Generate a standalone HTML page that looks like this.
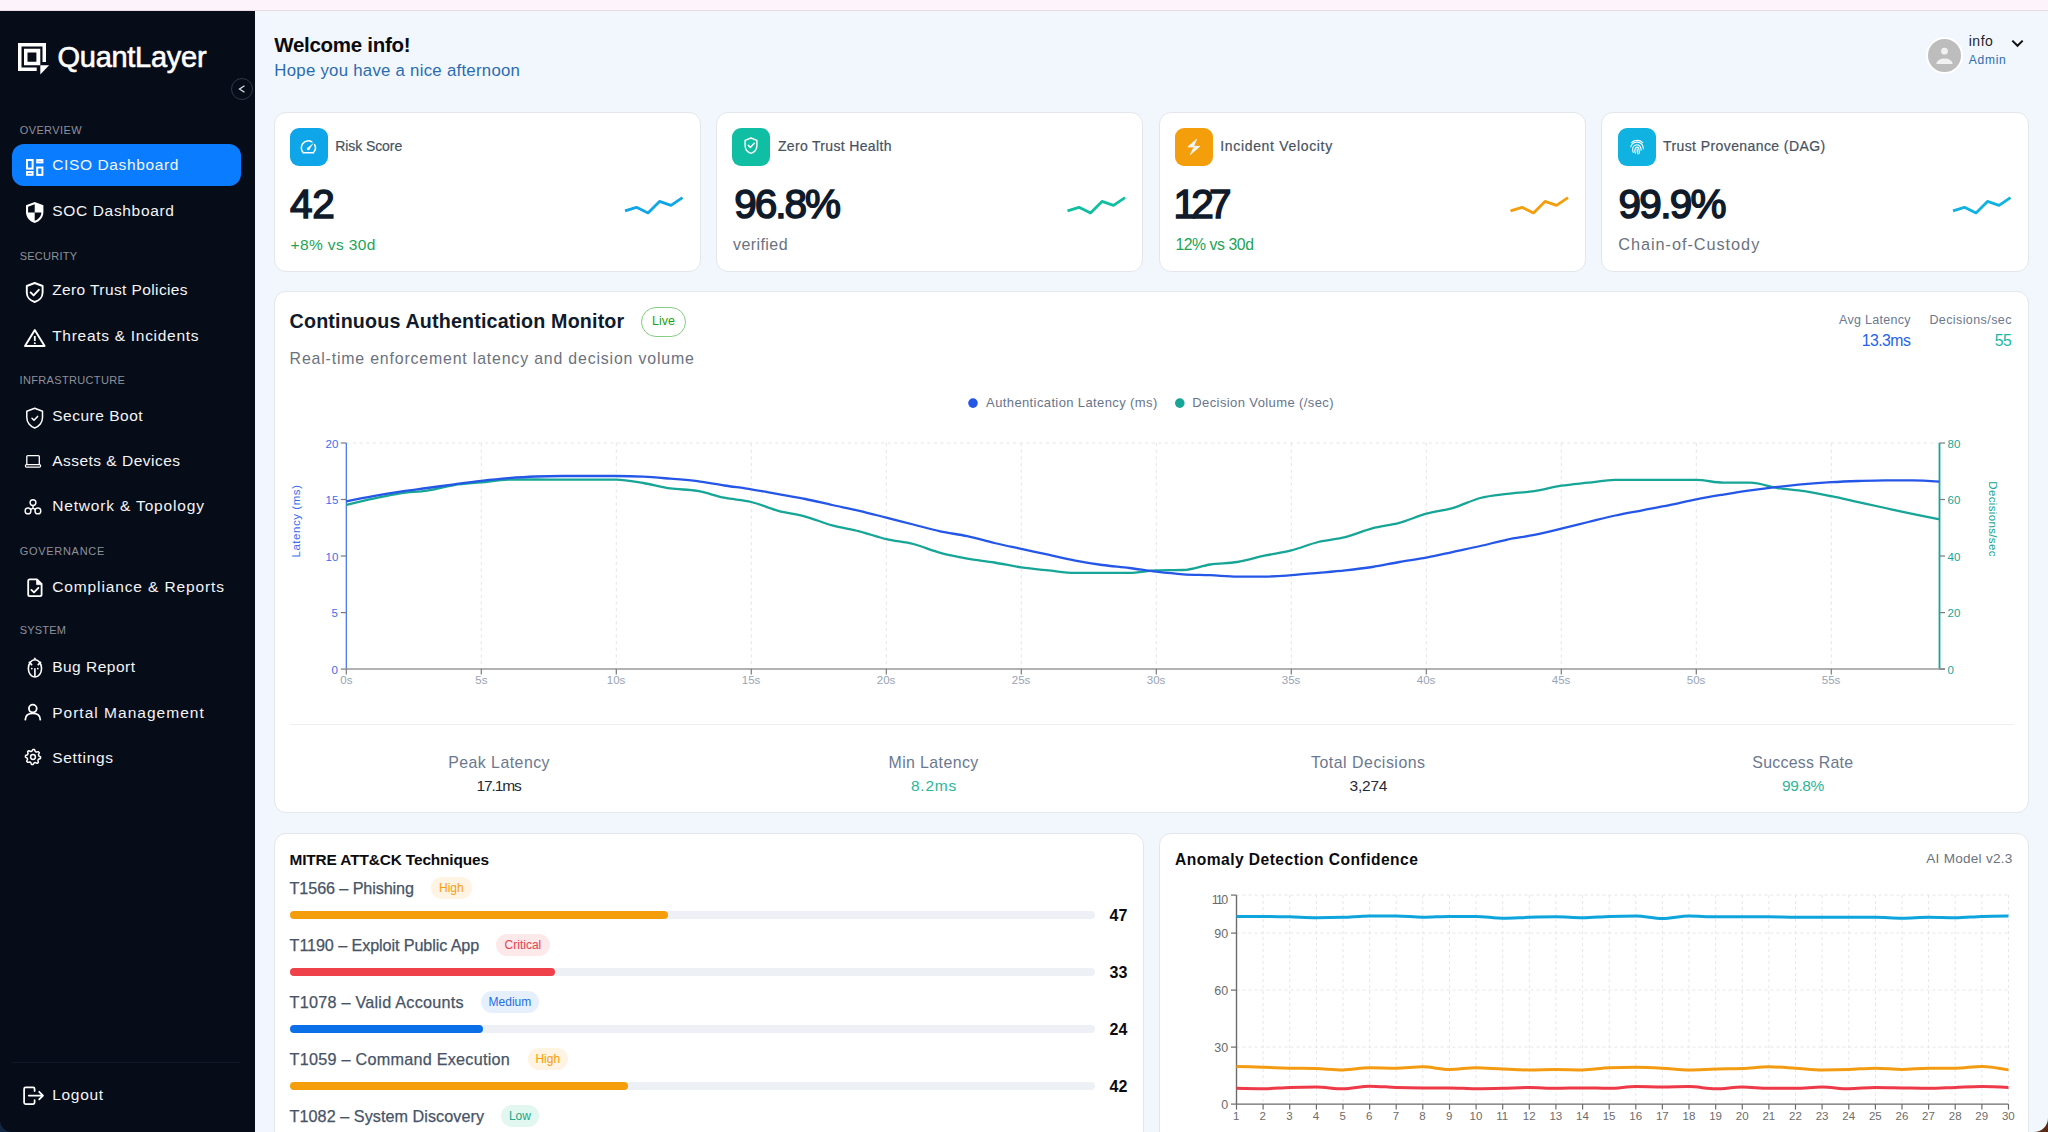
<!DOCTYPE html>
<html><head><meta charset="utf-8"><title>QuantLayer</title>
<style>
html,body{margin:0;padding:0;width:2048px;height:1132px;overflow:hidden;background:#f2f7fd;}
body{position:relative;font-family:"Liberation Sans",sans-serif;}
.t{position:absolute;white-space:pre;}
.b{position:absolute;box-sizing:border-box;}
svg.ov{position:absolute;left:0;top:0;}
</style></head><body>
<div class="b" style="left:0px;top:0px;width:2048px;height:11px;background:#fdf4fb;border-bottom:1px solid #eadbe3;"></div>
<div class="b" style="left:0px;top:11px;width:255px;height:1121px;background:#070c19;"></div>
<div class="b" style="left:274px;top:112px;width:427px;height:160px;background:#fff;border:1px solid #e3e6ea;border-radius:12px;"></div>
<div class="b" style="left:716.3px;top:112px;width:427px;height:160px;background:#fff;border:1px solid #e3e6ea;border-radius:12px;"></div>
<div class="b" style="left:1158.7px;top:112px;width:427px;height:160px;background:#fff;border:1px solid #e3e6ea;border-radius:12px;"></div>
<div class="b" style="left:1601px;top:112px;width:428px;height:160px;background:#fff;border:1px solid #e3e6ea;border-radius:12px;"></div>
<div class="b" style="left:274px;top:290.5px;width:1754.5px;height:522.5px;background:#fff;border:1px solid #e3e6ea;border-radius:12px;"></div>
<div class="b" style="left:274px;top:832.5px;width:869.5px;height:320px;background:#fff;border:1px solid #e3e6ea;border-radius:12px;"></div>
<div class="b" style="left:1159.3px;top:832.5px;width:869.7px;height:320px;background:#fff;border:1px solid #e3e6ea;border-radius:12px;"></div>
<div class="b" style="left:12px;top:144.3px;width:229px;height:41.5px;background:#0a7cff;border-radius:12px;"></div>
<div class="b" style="left:231px;top:78px;width:22px;height:22px;background:#070c19;border:1px solid #323846;border-radius:50%;"></div>
<div class="b" style="left:12px;top:1062px;width:228px;height:1px;background:#121826;"></div>
<div class="b" style="left:290px;top:128px;width:38px;height:38px;background:#0ea5e9;border-radius:9px;"></div>
<div class="b" style="left:732px;top:128px;width:38px;height:38px;background:#10bfa3;border-radius:9px;"></div>
<div class="b" style="left:1175px;top:128px;width:38px;height:38px;background:#f59e0b;border-radius:9px;"></div>
<div class="b" style="left:1617.5px;top:128px;width:38px;height:38px;background:#0fb2e0;border-radius:9px;"></div>
<div class="b" style="left:641px;top:307px;width:45px;height:30px;border:1px solid #84cf84;border-radius:15px;background:#fff;"></div>
<div class="b" style="left:289.5px;top:723.5px;width:1724px;height:1px;background:#eceef1;"></div>
<div class="b" style="left:431.4px;top:876.5px;width:40.200000000000045px;height:22.5px;background:#fff3e3;border-radius:11px;"></div>
<div class="b" style="left:289.5px;top:910.8px;width:805px;height:8px;background:#edf1f6;border-radius:4px;"></div>
<div class="b" style="left:289.5px;top:910.8px;width:378.35px;height:8px;background:#f59e0b;border-radius:4px;"></div>
<div class="b" style="left:496.4px;top:933.5px;width:53.30000000000007px;height:22.5px;background:#fde8ea;border-radius:11px;"></div>
<div class="b" style="left:289.5px;top:967.8px;width:805px;height:8px;background:#edf1f6;border-radius:4px;"></div>
<div class="b" style="left:289.5px;top:967.8px;width:265.65px;height:8px;background:#ef4149;border-radius:4px;"></div>
<div class="b" style="left:480.8px;top:990.5px;width:58.599999999999966px;height:22.5px;background:#e6f0fd;border-radius:11px;"></div>
<div class="b" style="left:289.5px;top:1024.8px;width:805px;height:8px;background:#edf1f6;border-radius:4px;"></div>
<div class="b" style="left:289.5px;top:1024.8px;width:193.2px;height:8px;background:#0b6fe8;border-radius:4px;"></div>
<div class="b" style="left:527.7px;top:1047.5px;width:40.39999999999998px;height:22.5px;background:#fff3e3;border-radius:11px;"></div>
<div class="b" style="left:289.5px;top:1081.8px;width:805px;height:8px;background:#edf1f6;border-radius:4px;"></div>
<div class="b" style="left:289.5px;top:1081.8px;width:338.1px;height:8px;background:#f59e0b;border-radius:4px;"></div>
<div class="b" style="left:501.2px;top:1104.5px;width:37.400000000000034px;height:22.5px;background:#e3f7f1;border-radius:11px;"></div>
<div class="b" style="left:1926px;top:37px;width:37px;height:37px;background:#bdbdbd;border:2px solid #fff;border-radius:50%;"></div>
<svg class="ov" width="2048" height="1132" viewBox="0 0 2048 1132">
<g fill="#fff"><path d="M18,43 H46 V62 H42.5 V46.5 H21.5 V67.5 H36.7 V71 H18 Z"/><path d="M24,48.7 H40.3 V65.3 H36.4 V52.6 H27.5 V61.8 H36.4 V65.3 H24 Z"/><path d="M40.3,65.3 H49.1 L40.3,74.5 Z"/></g>
<path d="M244.5,85.8 L239.5,89 L244.5,92.2" fill="none" stroke="#d7dbe2" stroke-width="1.3"/>
<g fill="none" stroke="#fff" stroke-width="2"><rect x="27" y="160" width="5.6" height="8.6"/><rect x="37.2" y="160" width="5.2" height="2.4"/><rect x="27" y="172" width="5.6" height="2.8"/><rect x="37.2" y="167.5" width="5.2" height="7.4"/></g>
<path d="M34.7,202 L43.4,205.3 V212 C43.4,217.5 39.6,221.5 34.7,223 C29.8,221.5 26,217.5 26,212 V205.3 Z" fill="#fff"/><path d="M34.7,204.2 L28.1,206.7 V212.4 H34.7 Z M34.7,212.4 V220.7 C38.5,219.3 41.2,216.2 41.4,212.4 Z" fill="#070c19"/>
<path d="M34.7,283 L42.6,286 V292.5 C42.6,297 39.3,300.8 34.7,302 C30.1,300.8 26.8,297 26.8,292.5 V286 Z" fill="none" stroke="#fff" stroke-width="1.9" stroke-linecap="round" stroke-linejoin="round"/><path d="M30.6,292.4 L33.6,295.4 L38.8,289.8" fill="none" stroke="#fff" stroke-width="1.9" stroke-linecap="round" stroke-linejoin="round" stroke-width="2.1"/>
<path d="M34.8,330 L44.6,346 H25 Z" fill="none" stroke="#fff" stroke-width="1.9" stroke-linecap="round" stroke-linejoin="round" stroke-width="2"/><path d="M34.8,336 V341" stroke="#fff" stroke-width="1.8"/><circle cx="34.8" cy="343.3" r="1" fill="#fff"/>
<path d="M34.7,408.3 L42.5,411.2 V417.6 C42.5,422.4 39.2,426.6 34.7,428 C30.2,426.6 26.8,422.4 26.8,417.6 V411.2 Z" fill="none" stroke="#fff" stroke-width="1.5" stroke-linejoin="round"/><path d="M32,418.2 L34,420.2 L37.6,416.4" fill="none" stroke="#fff" stroke-width="1.5" stroke-linecap="round" stroke-linejoin="round"/>
<path d="M26.8,464.6 V456.6 C26.8,455.9 27.2,455.6 27.8,455.6 H38.4 C39,455.6 39.3,455.9 39.3,456.6 V464.6" fill="none" stroke="#fff" stroke-width="1.3"/><rect x="25.4" y="464.6" width="15.2" height="2.6" rx="1.1" fill="none" stroke="#fff" stroke-width="1.2"/>
<g fill="none" stroke="#fff" stroke-width="1.4"><circle cx="33" cy="502.6" r="2.9"/><circle cx="28" cy="510.9" r="2.9"/><circle cx="37.9" cy="510.9" r="2.9"/><path d="M33,505.5 V508.2 M33,508.2 L30.6,509.6 M33,508.2 L35.4,509.6"/></g>
<path d="M36.9,579.3 H29.8 C28.8,579.3 28.2,579.9 28.2,580.9 V594.5 C28.2,595.5 28.8,596.1 29.8,596.1 H40 C41,596.1 41.6,595.5 41.6,594.5 V584 Z" fill="none" stroke="#fff" stroke-width="1.8" stroke-linejoin="round"/><path d="M36.6,579.6 V584.6 H41.4 Z" fill="#fff" stroke="#fff" stroke-width="0.8" stroke-linejoin="round"/><path d="M31.4,589.9 L34,592.4 L38.4,587.8" fill="none" stroke="#fff" stroke-width="1.8" stroke-linecap="round" stroke-linejoin="round"/>
<ellipse cx="34.95" cy="668.4" rx="6.6" ry="8.6" fill="none" stroke="#fff" stroke-width="1.6"/><path d="M33.3,659.6 L34.9,657.2 L36.6,659.6 Z" fill="#fff"/><path d="M29.4,662.4 L31.6,664.6 M40.5,662.4 L38.3,664.6" stroke="#fff" stroke-width="1.8" stroke-linecap="round"/><path d="M34.9,668.2 V676.8" stroke="#fff" stroke-width="1.6"/><circle cx="31.8" cy="668.6" r="0.9" fill="#fff"/><circle cx="37.8" cy="668.6" r="0.9" fill="#fff"/>
<g fill="none" stroke="#fff" stroke-width="1.8"><circle cx="32.8" cy="708.6" r="3.9"/><path d="M25.3,719.6 C25.5,715.4 28.7,713.4 32.8,713.4 C36.9,713.4 40.1,715.4 40.3,719.6" stroke-linecap="round"/></g>
<path d="M40.60,757.00 L40.45,758.48 L38.45,759.26 L37.91,760.28 L38.37,762.37 L37.22,763.32 L35.26,762.45 L34.15,762.79 L33.00,764.60 L31.52,764.45 L30.74,762.45 L29.72,761.91 L27.63,762.37 L26.68,761.22 L27.55,759.26 L27.21,758.15 L25.40,757.00 L25.55,755.52 L27.55,754.74 L28.09,753.72 L27.63,751.63 L28.78,750.68 L30.74,751.55 L31.85,751.21 L33.00,749.40 L34.48,749.55 L35.26,751.55 L36.28,752.09 L38.37,751.63 L39.32,752.78 L38.45,754.74 L38.79,755.85 Z" fill="none" stroke="#fff" stroke-width="1.5" stroke-linejoin="round"/><circle cx="33" cy="757" r="2.4" fill="none" stroke="#fff" stroke-width="1.5"/>
<path d="M34.6,1091.1 V1088.9 C34.6,1087.9 34.1,1087.3 33.1,1087.3 H25.6 C24.6,1087.3 24.1,1087.9 24.1,1088.9 V1102.4 C24.1,1103.4 24.6,1104 25.6,1104 H33.1 C34.1,1104 34.6,1103.4 34.6,1102.4 V1100.2" fill="none" stroke="#fff" stroke-width="1.75" stroke-linecap="round"/><path d="M28.8,1095.6 H42.8 M39.2,1091.8 L43,1095.6 L39.2,1099.4" fill="none" stroke="#fff" stroke-width="1.75" stroke-linecap="round" stroke-linejoin="round"/>
<g fill="none" stroke="#fff" stroke-width="1.5" stroke-linecap="round"><path d="M303.3,152.7 A7,7 0 0 1 311.9,141.8"/><path d="M314.6,144.6 A7,7 0 0 1 313.3,152.7"/><path d="M303.3,152.7 H313.3"/></g><path d="M307.3,148.2 L313.8,142.6 L309.3,149.7 Z" fill="#fff"/><circle cx="308.2" cy="148.9" r="1.35" fill="#fff"/>
<path d="M751,138 L756.9,140.3 V145.2 C756.9,149.2 754.4,152.3 751,153.3 C747.6,152.3 745.1,149.2 745.1,145.2 V140.3 Z" fill="none" stroke="#fff" stroke-width="1.4" stroke-linejoin="round"/><path d="M748.3,145.4 L750.3,147.4 L754.2,143.3" fill="none" stroke="#fff" stroke-width="1.5" stroke-linecap="round" stroke-linejoin="round"/>
<path d="M1196.6,139.3 L1187.9,146.8 L1194.1,147 L1190.4,154.6 L1199.7,146.4 L1193.5,146.2 Z" fill="#f4f6f8" stroke="#f4f6f8" stroke-width="0.9" stroke-linejoin="round"/>
<g fill="none" stroke="#fff" stroke-width="1.1" stroke-linecap="round"><path d="M1631.5,142.6 C1634.6,139.6 1639.6,139.6 1642.7,142.6"/><path d="M1630.7,146.8 C1631.6,142.9 1635.8,141.3 1639.2,142.6 C1641.8,143.6 1643.3,146.1 1643.3,148.8"/><path d="M1633.2,152.4 C1632.6,150.6 1632.5,148.9 1632.9,147.4 C1633.7,144.8 1637.6,143.9 1639.7,146 C1640.8,147.1 1641.1,148.5 1641.1,150.2"/><path d="M1635.4,153.3 C1634.8,151.5 1634.7,149.6 1635.3,148.2 C1636,146.7 1638.6,146.8 1638.9,148.6 C1639.1,149.9 1639,151.7 1639.6,153.1"/><path d="M1637.1,148.8 C1637,150.8 1637.3,152.6 1638.1,154.1"/></g>
<polyline points="625.0,210.8 636.5,207.3 648.0,212.9 659.5,201.4 671.0,205.3 682.5,197.7" fill="none" stroke="#0ea5e9" stroke-width="2.8" stroke-linejoin="round"/>
<polyline points="1067.5,210.8 1079.0,207.3 1090.5,212.9 1102.0,201.4 1113.5,205.3 1125.0,197.7" fill="none" stroke="#10bf9f" stroke-width="2.8" stroke-linejoin="round"/>
<polyline points="1510.5,210.8 1522.0,207.3 1533.5,212.9 1545.0,201.4 1556.5,205.3 1568.0,197.7" fill="none" stroke="#f59e0b" stroke-width="2.8" stroke-linejoin="round"/>
<polyline points="1953.0,210.8 1964.5,207.3 1976.0,212.9 1987.5,201.4 1999.0,205.3 2010.5,197.7" fill="none" stroke="#0fb2e0" stroke-width="2.8" stroke-linejoin="round"/>
<circle cx="1944.5" cy="51.2" r="3.4" fill="#f1f1f1"/><path d="M1936.4,64 C1936.4,60.3 1940.6,58.4 1944.5,58.4 C1948.4,58.4 1952.6,60.3 1952.6,64 Z" fill="#f1f1f1"/>
<path d="M2012.3,40.6 L2017.5,45.8 L2022.7,40.6" fill="none" stroke="#111" stroke-width="2"/>
<line x1="481.3" y1="443" x2="481.3" y2="669.1" stroke="#e3e6ea" stroke-width="1" stroke-dasharray="3.3 3.3"/>
<line x1="616.3" y1="443" x2="616.3" y2="669.1" stroke="#e3e6ea" stroke-width="1" stroke-dasharray="3.3 3.3"/>
<line x1="751.3" y1="443" x2="751.3" y2="669.1" stroke="#e3e6ea" stroke-width="1" stroke-dasharray="3.3 3.3"/>
<line x1="886.3" y1="443" x2="886.3" y2="669.1" stroke="#e3e6ea" stroke-width="1" stroke-dasharray="3.3 3.3"/>
<line x1="1021.3" y1="443" x2="1021.3" y2="669.1" stroke="#e3e6ea" stroke-width="1" stroke-dasharray="3.3 3.3"/>
<line x1="1156.3" y1="443" x2="1156.3" y2="669.1" stroke="#e3e6ea" stroke-width="1" stroke-dasharray="3.3 3.3"/>
<line x1="1291.3" y1="443" x2="1291.3" y2="669.1" stroke="#e3e6ea" stroke-width="1" stroke-dasharray="3.3 3.3"/>
<line x1="1426.3" y1="443" x2="1426.3" y2="669.1" stroke="#e3e6ea" stroke-width="1" stroke-dasharray="3.3 3.3"/>
<line x1="1561.3" y1="443" x2="1561.3" y2="669.1" stroke="#e3e6ea" stroke-width="1" stroke-dasharray="3.3 3.3"/>
<line x1="1696.3" y1="443" x2="1696.3" y2="669.1" stroke="#e3e6ea" stroke-width="1" stroke-dasharray="3.3 3.3"/>
<line x1="1831.3" y1="443" x2="1831.3" y2="669.1" stroke="#e3e6ea" stroke-width="1" stroke-dasharray="3.3 3.3"/>
<line x1="346.3" y1="443" x2="1939.5" y2="443" stroke="#e3e6ea" stroke-width="1" stroke-dasharray="3.3 3.3"/>
<line x1="346.3" y1="443" x2="346.3" y2="669.1" stroke="#3b6ef0" stroke-width="1.2"/>
<line x1="1939.5" y1="443" x2="1939.5" y2="669.1" stroke="#17a697" stroke-width="1.8"/>
<line x1="346.3" y1="669.1" x2="1945.0" y2="669.1" stroke="#999" stroke-width="1.5"/>
<line x1="340.8" y1="443.0" x2="346.3" y2="443.0" stroke="#7a7a7a" stroke-width="1.2"/>
<line x1="1939.5" y1="443.0" x2="1945.0" y2="443.0" stroke="#7a7a7a" stroke-width="1.2"/>
<line x1="340.8" y1="499.5" x2="346.3" y2="499.5" stroke="#7a7a7a" stroke-width="1.2"/>
<line x1="1939.5" y1="499.5" x2="1945.0" y2="499.5" stroke="#7a7a7a" stroke-width="1.2"/>
<line x1="340.8" y1="556.0" x2="346.3" y2="556.0" stroke="#7a7a7a" stroke-width="1.2"/>
<line x1="1939.5" y1="556.0" x2="1945.0" y2="556.0" stroke="#7a7a7a" stroke-width="1.2"/>
<line x1="340.8" y1="612.6" x2="346.3" y2="612.6" stroke="#7a7a7a" stroke-width="1.2"/>
<line x1="1939.5" y1="612.6" x2="1945.0" y2="612.6" stroke="#7a7a7a" stroke-width="1.2"/>
<line x1="340.8" y1="669.1" x2="346.3" y2="669.1" stroke="#7a7a7a" stroke-width="1.2"/>
<line x1="1939.5" y1="669.1" x2="1945.0" y2="669.1" stroke="#7a7a7a" stroke-width="1.2"/>
<line x1="346.3" y1="669.1" x2="346.3" y2="674.6" stroke="#7a7a7a" stroke-width="1.2"/>
<line x1="481.3" y1="669.1" x2="481.3" y2="674.6" stroke="#7a7a7a" stroke-width="1.2"/>
<line x1="616.3" y1="669.1" x2="616.3" y2="674.6" stroke="#7a7a7a" stroke-width="1.2"/>
<line x1="751.3" y1="669.1" x2="751.3" y2="674.6" stroke="#7a7a7a" stroke-width="1.2"/>
<line x1="886.3" y1="669.1" x2="886.3" y2="674.6" stroke="#7a7a7a" stroke-width="1.2"/>
<line x1="1021.3" y1="669.1" x2="1021.3" y2="674.6" stroke="#7a7a7a" stroke-width="1.2"/>
<line x1="1156.3" y1="669.1" x2="1156.3" y2="674.6" stroke="#7a7a7a" stroke-width="1.2"/>
<line x1="1291.3" y1="669.1" x2="1291.3" y2="674.6" stroke="#7a7a7a" stroke-width="1.2"/>
<line x1="1426.3" y1="669.1" x2="1426.3" y2="674.6" stroke="#7a7a7a" stroke-width="1.2"/>
<line x1="1561.3" y1="669.1" x2="1561.3" y2="674.6" stroke="#7a7a7a" stroke-width="1.2"/>
<line x1="1696.3" y1="669.1" x2="1696.3" y2="674.6" stroke="#7a7a7a" stroke-width="1.2"/>
<line x1="1831.3" y1="669.1" x2="1831.3" y2="674.6" stroke="#7a7a7a" stroke-width="1.2"/>
<path d="M346.30,504.80 C355.30,502.71 364.30,500.62 373.30,498.70 C382.30,496.78 391.30,494.65 400.30,493.30 C409.30,491.95 418.30,491.98 427.30,490.60 C436.30,489.22 445.30,486.37 454.30,485.00 C463.30,483.63 472.30,483.30 481.30,482.40 C490.30,481.50 499.30,479.67 508.30,479.60 C517.30,479.53 526.30,479.50 535.30,479.50 C544.30,479.50 553.30,479.60 562.30,479.60 C571.30,479.60 580.30,479.60 589.30,479.60 C598.30,479.60 607.30,479.60 616.30,479.60 C625.30,479.60 634.30,481.53 643.30,483.00 C652.30,484.47 661.30,487.08 670.30,488.40 C679.30,489.72 688.30,489.35 697.30,490.90 C706.30,492.45 715.30,495.85 724.30,497.70 C733.30,499.55 742.30,499.82 751.30,502.00 C760.30,504.18 769.30,508.37 778.30,510.80 C787.30,513.23 796.30,514.17 805.30,516.60 C814.30,519.03 823.30,522.95 832.30,525.40 C841.30,527.85 850.30,529.02 859.30,531.30 C868.30,533.58 877.30,536.98 886.30,539.10 C895.30,541.22 904.30,541.72 913.30,544.00 C922.30,546.28 931.30,550.37 940.30,552.80 C949.30,555.23 958.30,556.98 967.30,558.60 C976.30,560.22 985.30,561.03 994.30,562.50 C1003.30,563.97 1012.30,566.08 1021.30,567.40 C1030.30,568.72 1039.30,569.48 1048.30,570.40 C1057.30,571.32 1066.30,572.90 1075.30,572.90 C1084.30,572.90 1093.30,572.90 1102.30,572.90 C1111.30,572.90 1120.30,572.90 1129.30,572.90 C1138.30,572.90 1147.30,570.67 1156.30,570.40 C1165.30,570.13 1174.30,570.27 1183.30,570.00 C1192.30,569.73 1201.30,565.83 1210.30,564.50 C1219.30,563.17 1228.30,563.47 1237.30,562.00 C1246.30,560.53 1255.30,557.63 1264.30,555.70 C1273.30,553.77 1282.30,552.68 1291.30,550.40 C1300.30,548.12 1309.30,544.22 1318.30,542.00 C1327.30,539.78 1336.30,539.37 1345.30,537.10 C1354.30,534.83 1363.30,530.77 1372.30,528.40 C1381.30,526.03 1390.30,525.35 1399.30,522.90 C1408.30,520.45 1417.30,516.20 1426.30,513.70 C1435.30,511.20 1444.30,510.52 1453.30,507.90 C1462.30,505.28 1471.30,500.33 1480.30,498.00 C1489.30,495.67 1498.30,495.05 1507.30,493.90 C1516.30,492.75 1525.30,492.47 1534.30,491.10 C1543.30,489.73 1552.30,487.10 1561.30,485.70 C1570.30,484.30 1579.30,483.68 1588.30,482.70 C1597.30,481.72 1606.30,479.80 1615.30,479.80 C1624.30,479.80 1633.30,479.80 1642.30,479.80 C1651.30,479.80 1660.30,479.80 1669.30,479.80 C1678.30,479.80 1687.30,479.80 1696.30,479.80 C1705.30,479.80 1714.30,482.70 1723.30,482.70 C1732.30,482.70 1741.30,482.70 1750.30,482.70 C1759.30,482.70 1768.30,486.60 1777.30,488.00 C1786.30,489.40 1795.30,489.73 1804.30,491.10 C1813.30,492.47 1822.30,494.37 1831.30,496.20 C1840.30,498.03 1849.30,500.13 1858.30,502.10 C1867.30,504.07 1876.30,506.05 1885.30,508.00 C1894.30,509.95 1903.30,511.93 1912.30,513.80 C1921.30,515.67 1930.30,517.43 1939.30,519.20" fill="none" stroke="#16a596" stroke-width="2.3"/>
<path d="M346.30,501.30 C355.30,499.51 364.30,497.72 373.30,496.10 C382.30,494.48 391.30,492.95 400.30,491.60 C409.30,490.25 418.30,489.22 427.30,488.00 C436.30,486.78 445.30,485.48 454.30,484.30 C463.30,483.12 472.30,481.92 481.30,480.90 C490.30,479.88 499.30,478.93 508.30,478.20 C517.30,477.47 526.30,476.83 535.30,476.50 C544.30,476.17 553.30,476.00 562.30,476.00 C571.30,476.00 580.30,476.00 589.30,476.00 C598.30,476.00 607.30,476.00 616.30,476.00 C625.30,476.00 634.30,476.25 643.30,476.70 C652.30,477.15 661.30,477.97 670.30,478.70 C679.30,479.43 688.30,479.97 697.30,481.10 C706.30,482.23 715.30,484.13 724.30,485.50 C733.30,486.87 742.30,487.85 751.30,489.30 C760.30,490.75 769.30,492.58 778.30,494.20 C787.30,495.82 796.30,497.20 805.30,499.00 C814.30,500.80 823.30,503.03 832.30,505.00 C841.30,506.97 850.30,508.70 859.30,510.80 C868.30,512.90 877.30,515.32 886.30,517.60 C895.30,519.88 904.30,522.22 913.30,524.50 C922.30,526.78 931.30,529.35 940.30,531.30 C949.30,533.25 958.30,534.25 967.30,536.20 C976.30,538.15 985.30,540.88 994.30,543.00 C1003.30,545.12 1012.30,546.95 1021.30,548.90 C1030.30,550.85 1039.30,552.75 1048.30,554.70 C1057.30,556.65 1066.30,558.88 1075.30,560.60 C1084.30,562.32 1093.30,563.77 1102.30,565.00 C1111.30,566.23 1120.30,566.88 1129.30,568.00 C1138.30,569.12 1147.30,570.65 1156.30,571.70 C1165.30,572.75 1174.30,573.72 1183.30,574.30 C1192.30,574.88 1201.30,574.82 1210.30,575.20 C1219.30,575.58 1228.30,576.60 1237.30,576.60 C1246.30,576.60 1255.30,576.60 1264.30,576.60 C1273.30,576.60 1282.30,575.82 1291.30,575.20 C1300.30,574.58 1309.30,573.70 1318.30,572.90 C1327.30,572.10 1336.30,571.38 1345.30,570.40 C1354.30,569.42 1363.30,568.40 1372.30,567.00 C1381.30,565.60 1390.30,563.55 1399.30,562.00 C1408.30,560.45 1417.30,559.40 1426.30,557.70 C1435.30,556.00 1444.30,553.75 1453.30,551.80 C1462.30,549.85 1471.30,548.03 1480.30,546.00 C1489.30,543.97 1498.30,541.45 1507.30,539.60 C1516.30,537.75 1525.30,536.73 1534.30,534.90 C1543.30,533.07 1552.30,530.75 1561.30,528.60 C1570.30,526.45 1579.30,524.18 1588.30,522.00 C1597.30,519.82 1606.30,517.45 1615.30,515.50 C1624.30,513.55 1633.30,512.02 1642.30,510.30 C1651.30,508.58 1660.30,507.03 1669.30,505.20 C1678.30,503.37 1687.30,501.07 1696.30,499.30 C1705.30,497.53 1714.30,496.08 1723.30,494.60 C1732.30,493.12 1741.30,491.68 1750.30,490.40 C1759.30,489.12 1768.30,487.95 1777.30,486.90 C1786.30,485.85 1795.30,484.88 1804.30,484.10 C1813.30,483.32 1822.30,482.72 1831.30,482.20 C1840.30,481.68 1849.30,481.32 1858.30,481.00 C1867.30,480.68 1876.30,480.30 1885.30,480.30 C1894.30,480.30 1903.30,480.30 1912.30,480.30 C1921.30,480.30 1930.30,481.00 1939.30,481.70" fill="none" stroke="#2456e8" stroke-width="2.3"/>
<circle cx="973" cy="403.1" r="4.8" fill="#2456e8"/><circle cx="1179.8" cy="403.1" r="4.8" fill="#16a596"/>
<line x1="1263.1" y1="895.1" x2="1263.1" y2="1104.1" stroke="#e5e7eb" stroke-width="1" stroke-dasharray="3 3"/>
<line x1="1289.7" y1="895.1" x2="1289.7" y2="1104.1" stroke="#e5e7eb" stroke-width="1" stroke-dasharray="3 3"/>
<line x1="1316.4" y1="895.1" x2="1316.4" y2="1104.1" stroke="#e5e7eb" stroke-width="1" stroke-dasharray="3 3"/>
<line x1="1343.0" y1="895.1" x2="1343.0" y2="1104.1" stroke="#e5e7eb" stroke-width="1" stroke-dasharray="3 3"/>
<line x1="1369.6" y1="895.1" x2="1369.6" y2="1104.1" stroke="#e5e7eb" stroke-width="1" stroke-dasharray="3 3"/>
<line x1="1396.2" y1="895.1" x2="1396.2" y2="1104.1" stroke="#e5e7eb" stroke-width="1" stroke-dasharray="3 3"/>
<line x1="1422.8" y1="895.1" x2="1422.8" y2="1104.1" stroke="#e5e7eb" stroke-width="1" stroke-dasharray="3 3"/>
<line x1="1449.5" y1="895.1" x2="1449.5" y2="1104.1" stroke="#e5e7eb" stroke-width="1" stroke-dasharray="3 3"/>
<line x1="1476.1" y1="895.1" x2="1476.1" y2="1104.1" stroke="#e5e7eb" stroke-width="1" stroke-dasharray="3 3"/>
<line x1="1502.7" y1="895.1" x2="1502.7" y2="1104.1" stroke="#e5e7eb" stroke-width="1" stroke-dasharray="3 3"/>
<line x1="1529.3" y1="895.1" x2="1529.3" y2="1104.1" stroke="#e5e7eb" stroke-width="1" stroke-dasharray="3 3"/>
<line x1="1555.9" y1="895.1" x2="1555.9" y2="1104.1" stroke="#e5e7eb" stroke-width="1" stroke-dasharray="3 3"/>
<line x1="1582.6" y1="895.1" x2="1582.6" y2="1104.1" stroke="#e5e7eb" stroke-width="1" stroke-dasharray="3 3"/>
<line x1="1609.2" y1="895.1" x2="1609.2" y2="1104.1" stroke="#e5e7eb" stroke-width="1" stroke-dasharray="3 3"/>
<line x1="1635.8" y1="895.1" x2="1635.8" y2="1104.1" stroke="#e5e7eb" stroke-width="1" stroke-dasharray="3 3"/>
<line x1="1662.4" y1="895.1" x2="1662.4" y2="1104.1" stroke="#e5e7eb" stroke-width="1" stroke-dasharray="3 3"/>
<line x1="1689.0" y1="895.1" x2="1689.0" y2="1104.1" stroke="#e5e7eb" stroke-width="1" stroke-dasharray="3 3"/>
<line x1="1715.7" y1="895.1" x2="1715.7" y2="1104.1" stroke="#e5e7eb" stroke-width="1" stroke-dasharray="3 3"/>
<line x1="1742.3" y1="895.1" x2="1742.3" y2="1104.1" stroke="#e5e7eb" stroke-width="1" stroke-dasharray="3 3"/>
<line x1="1768.9" y1="895.1" x2="1768.9" y2="1104.1" stroke="#e5e7eb" stroke-width="1" stroke-dasharray="3 3"/>
<line x1="1795.5" y1="895.1" x2="1795.5" y2="1104.1" stroke="#e5e7eb" stroke-width="1" stroke-dasharray="3 3"/>
<line x1="1822.1" y1="895.1" x2="1822.1" y2="1104.1" stroke="#e5e7eb" stroke-width="1" stroke-dasharray="3 3"/>
<line x1="1848.8" y1="895.1" x2="1848.8" y2="1104.1" stroke="#e5e7eb" stroke-width="1" stroke-dasharray="3 3"/>
<line x1="1875.4" y1="895.1" x2="1875.4" y2="1104.1" stroke="#e5e7eb" stroke-width="1" stroke-dasharray="3 3"/>
<line x1="1902.0" y1="895.1" x2="1902.0" y2="1104.1" stroke="#e5e7eb" stroke-width="1" stroke-dasharray="3 3"/>
<line x1="1928.6" y1="895.1" x2="1928.6" y2="1104.1" stroke="#e5e7eb" stroke-width="1" stroke-dasharray="3 3"/>
<line x1="1955.2" y1="895.1" x2="1955.2" y2="1104.1" stroke="#e5e7eb" stroke-width="1" stroke-dasharray="3 3"/>
<line x1="1981.9" y1="895.1" x2="1981.9" y2="1104.1" stroke="#e5e7eb" stroke-width="1" stroke-dasharray="3 3"/>
<line x1="2008.5" y1="895.1" x2="2008.5" y2="1104.1" stroke="#e5e7eb" stroke-width="1" stroke-dasharray="3 3"/>
<line x1="1236.5" y1="895.1" x2="2008.5" y2="895.1" stroke="#e5e7eb" stroke-width="1" stroke-dasharray="3 3"/>
<line x1="1236.5" y1="933.1" x2="2008.5" y2="933.1" stroke="#e5e7eb" stroke-width="1" stroke-dasharray="3 3"/>
<line x1="1236.5" y1="990.1" x2="2008.5" y2="990.1" stroke="#e5e7eb" stroke-width="1" stroke-dasharray="3 3"/>
<line x1="1236.5" y1="1047.1" x2="2008.5" y2="1047.1" stroke="#e5e7eb" stroke-width="1" stroke-dasharray="3 3"/>
<line x1="1236.5" y1="895.1" x2="1236.5" y2="1104.1" stroke="#6b6b6b" stroke-width="1.4"/>
<line x1="1236.5" y1="1104.1" x2="2008.5" y2="1104.1" stroke="#6b6b6b" stroke-width="1.4"/>
<line x1="1231.0" y1="895.1" x2="1236.5" y2="895.1" stroke="#6b6b6b" stroke-width="1.2"/>
<line x1="1231.0" y1="933.1" x2="1236.5" y2="933.1" stroke="#6b6b6b" stroke-width="1.2"/>
<line x1="1231.0" y1="990.1" x2="1236.5" y2="990.1" stroke="#6b6b6b" stroke-width="1.2"/>
<line x1="1231.0" y1="1047.1" x2="1236.5" y2="1047.1" stroke="#6b6b6b" stroke-width="1.2"/>
<line x1="1231.0" y1="1104.1" x2="1236.5" y2="1104.1" stroke="#6b6b6b" stroke-width="1.2"/>
<line x1="1236.5" y1="1104.1" x2="1236.5" y2="1109.6" stroke="#6b6b6b" stroke-width="1.2"/>
<line x1="1263.1" y1="1104.1" x2="1263.1" y2="1109.6" stroke="#6b6b6b" stroke-width="1.2"/>
<line x1="1289.7" y1="1104.1" x2="1289.7" y2="1109.6" stroke="#6b6b6b" stroke-width="1.2"/>
<line x1="1316.4" y1="1104.1" x2="1316.4" y2="1109.6" stroke="#6b6b6b" stroke-width="1.2"/>
<line x1="1343.0" y1="1104.1" x2="1343.0" y2="1109.6" stroke="#6b6b6b" stroke-width="1.2"/>
<line x1="1369.6" y1="1104.1" x2="1369.6" y2="1109.6" stroke="#6b6b6b" stroke-width="1.2"/>
<line x1="1396.2" y1="1104.1" x2="1396.2" y2="1109.6" stroke="#6b6b6b" stroke-width="1.2"/>
<line x1="1422.8" y1="1104.1" x2="1422.8" y2="1109.6" stroke="#6b6b6b" stroke-width="1.2"/>
<line x1="1449.5" y1="1104.1" x2="1449.5" y2="1109.6" stroke="#6b6b6b" stroke-width="1.2"/>
<line x1="1476.1" y1="1104.1" x2="1476.1" y2="1109.6" stroke="#6b6b6b" stroke-width="1.2"/>
<line x1="1502.7" y1="1104.1" x2="1502.7" y2="1109.6" stroke="#6b6b6b" stroke-width="1.2"/>
<line x1="1529.3" y1="1104.1" x2="1529.3" y2="1109.6" stroke="#6b6b6b" stroke-width="1.2"/>
<line x1="1555.9" y1="1104.1" x2="1555.9" y2="1109.6" stroke="#6b6b6b" stroke-width="1.2"/>
<line x1="1582.6" y1="1104.1" x2="1582.6" y2="1109.6" stroke="#6b6b6b" stroke-width="1.2"/>
<line x1="1609.2" y1="1104.1" x2="1609.2" y2="1109.6" stroke="#6b6b6b" stroke-width="1.2"/>
<line x1="1635.8" y1="1104.1" x2="1635.8" y2="1109.6" stroke="#6b6b6b" stroke-width="1.2"/>
<line x1="1662.4" y1="1104.1" x2="1662.4" y2="1109.6" stroke="#6b6b6b" stroke-width="1.2"/>
<line x1="1689.0" y1="1104.1" x2="1689.0" y2="1109.6" stroke="#6b6b6b" stroke-width="1.2"/>
<line x1="1715.7" y1="1104.1" x2="1715.7" y2="1109.6" stroke="#6b6b6b" stroke-width="1.2"/>
<line x1="1742.3" y1="1104.1" x2="1742.3" y2="1109.6" stroke="#6b6b6b" stroke-width="1.2"/>
<line x1="1768.9" y1="1104.1" x2="1768.9" y2="1109.6" stroke="#6b6b6b" stroke-width="1.2"/>
<line x1="1795.5" y1="1104.1" x2="1795.5" y2="1109.6" stroke="#6b6b6b" stroke-width="1.2"/>
<line x1="1822.1" y1="1104.1" x2="1822.1" y2="1109.6" stroke="#6b6b6b" stroke-width="1.2"/>
<line x1="1848.8" y1="1104.1" x2="1848.8" y2="1109.6" stroke="#6b6b6b" stroke-width="1.2"/>
<line x1="1875.4" y1="1104.1" x2="1875.4" y2="1109.6" stroke="#6b6b6b" stroke-width="1.2"/>
<line x1="1902.0" y1="1104.1" x2="1902.0" y2="1109.6" stroke="#6b6b6b" stroke-width="1.2"/>
<line x1="1928.6" y1="1104.1" x2="1928.6" y2="1109.6" stroke="#6b6b6b" stroke-width="1.2"/>
<line x1="1955.2" y1="1104.1" x2="1955.2" y2="1109.6" stroke="#6b6b6b" stroke-width="1.2"/>
<line x1="1981.9" y1="1104.1" x2="1981.9" y2="1109.6" stroke="#6b6b6b" stroke-width="1.2"/>
<line x1="2008.5" y1="1104.1" x2="2008.5" y2="1109.6" stroke="#6b6b6b" stroke-width="1.2"/>
<path d="M1236.50,1088.33 C1245.37,1088.55 1254.25,1088.77 1263.12,1088.77 C1271.99,1088.77 1280.87,1087.75 1289.74,1087.46 C1298.61,1087.16 1307.49,1087.02 1316.36,1087.02 C1325.23,1087.02 1334.11,1088.77 1342.98,1088.77 C1351.85,1088.77 1360.73,1086.14 1369.60,1086.14 C1378.47,1086.14 1387.35,1087.16 1396.22,1087.46 C1405.09,1087.75 1413.97,1087.89 1422.84,1087.89 C1431.71,1087.89 1440.59,1087.89 1449.46,1087.89 C1458.33,1087.89 1467.21,1088.77 1476.08,1088.77 C1484.95,1088.77 1493.83,1088.55 1502.70,1088.33 C1511.57,1088.11 1520.45,1087.46 1529.32,1087.46 C1538.19,1087.46 1547.07,1088.33 1555.94,1088.33 C1564.81,1088.33 1573.69,1087.89 1582.56,1087.89 C1591.43,1087.89 1600.31,1088.33 1609.18,1088.33 C1618.05,1088.33 1626.93,1086.58 1635.80,1086.58 C1644.67,1086.58 1653.55,1087.02 1662.42,1087.02 C1671.29,1087.02 1680.17,1086.58 1689.04,1086.58 C1697.91,1086.58 1706.79,1088.77 1715.66,1088.77 C1724.53,1088.77 1733.41,1087.02 1742.28,1087.02 C1751.15,1087.02 1760.03,1088.33 1768.90,1088.33 C1777.77,1088.33 1786.65,1088.33 1795.52,1088.33 C1804.39,1088.33 1813.27,1087.02 1822.14,1087.02 C1831.01,1087.02 1839.89,1088.77 1848.76,1088.77 C1857.63,1088.77 1866.51,1087.46 1875.38,1087.46 C1884.25,1087.46 1893.13,1087.75 1902.00,1087.89 C1910.87,1088.04 1919.75,1088.33 1928.62,1088.33 C1937.49,1088.33 1946.37,1087.75 1955.24,1087.46 C1964.11,1087.16 1972.99,1086.58 1981.86,1086.58 C1990.73,1086.58 1999.61,1087.02 2008.48,1087.46" fill="none" stroke="#ee3a48" stroke-width="3"/>
<path d="M1236.50,1066.40 C1245.37,1066.70 1254.25,1066.99 1263.12,1067.28 C1271.99,1067.57 1280.87,1067.94 1289.74,1068.16 C1298.61,1068.38 1307.49,1068.30 1316.36,1068.60 C1325.23,1068.89 1334.11,1069.91 1342.98,1069.91 C1351.85,1069.91 1360.73,1067.72 1369.60,1067.72 C1378.47,1067.72 1387.35,1068.16 1396.22,1068.16 C1405.09,1068.16 1413.97,1066.84 1422.84,1066.84 C1431.71,1066.84 1440.59,1069.47 1449.46,1069.47 C1458.33,1069.47 1467.21,1067.72 1476.08,1067.72 C1484.95,1067.72 1493.83,1068.67 1502.70,1069.04 C1511.57,1069.40 1520.45,1069.91 1529.32,1069.91 C1538.19,1069.91 1547.07,1069.47 1555.94,1069.47 C1564.81,1069.47 1573.69,1069.91 1582.56,1069.91 C1591.43,1069.91 1600.31,1068.01 1609.18,1067.72 C1618.05,1067.43 1626.93,1067.28 1635.80,1067.28 C1644.67,1067.28 1653.55,1067.72 1662.42,1068.16 C1671.29,1068.60 1680.17,1069.91 1689.04,1069.91 C1697.91,1069.91 1706.79,1069.25 1715.66,1069.04 C1724.53,1068.82 1733.41,1068.89 1742.28,1068.60 C1751.15,1068.30 1760.03,1066.84 1768.90,1066.84 C1777.77,1066.84 1786.65,1067.65 1795.52,1068.16 C1804.39,1068.67 1813.27,1069.91 1822.14,1069.91 C1831.01,1069.91 1839.89,1069.77 1848.76,1069.47 C1857.63,1069.18 1866.51,1068.16 1875.38,1068.16 C1884.25,1068.16 1893.13,1069.47 1902.00,1069.47 C1910.87,1069.47 1919.75,1068.16 1928.62,1068.16 C1937.49,1068.16 1946.37,1068.16 1955.24,1068.16 C1964.11,1068.16 1972.99,1066.40 1981.86,1066.40 C1990.73,1066.40 1999.61,1068.16 2008.48,1069.91" fill="none" stroke="#f39c12" stroke-width="3"/>
<path d="M1236.50,916.40 C1245.37,916.40 1254.25,916.40 1263.12,916.40 C1271.99,916.40 1280.87,916.62 1289.74,916.84 C1298.61,917.06 1307.49,917.72 1316.36,917.72 C1325.23,917.72 1334.11,917.57 1342.98,917.28 C1351.85,916.99 1360.73,915.96 1369.60,915.96 C1378.47,915.96 1387.35,915.96 1396.22,915.96 C1405.09,915.96 1413.97,917.28 1422.84,917.28 C1431.71,917.28 1440.59,916.40 1449.46,916.40 C1458.33,916.40 1467.21,916.40 1476.08,916.40 C1484.95,916.40 1493.83,918.16 1502.70,918.16 C1511.57,918.16 1520.45,917.50 1529.32,917.28 C1538.19,917.06 1547.07,916.84 1555.94,916.84 C1564.81,916.84 1573.69,917.72 1582.56,917.72 C1591.43,917.72 1600.31,916.70 1609.18,916.40 C1618.05,916.11 1626.93,915.96 1635.80,915.96 C1644.67,915.96 1653.55,918.60 1662.42,918.60 C1671.29,918.60 1680.17,915.96 1689.04,915.96 C1697.91,915.96 1706.79,916.84 1715.66,916.84 C1724.53,916.84 1733.41,916.84 1742.28,916.84 C1751.15,916.84 1760.03,916.84 1768.90,916.84 C1777.77,916.84 1786.65,917.28 1795.52,917.28 C1804.39,917.28 1813.27,917.28 1822.14,917.28 C1831.01,917.28 1839.89,917.28 1848.76,917.28 C1857.63,917.28 1866.51,917.28 1875.38,917.28 C1884.25,917.28 1893.13,918.16 1902.00,918.16 C1910.87,918.16 1919.75,917.28 1928.62,917.28 C1937.49,917.28 1946.37,917.72 1955.24,917.72 C1964.11,917.72 1972.99,916.70 1981.86,916.40 C1990.73,916.11 1999.61,916.04 2008.48,915.96" fill="none" stroke="#0ea5dd" stroke-width="3"/>
<path d="M0,1120 A12,12 0 0 0 12,1132 H0 Z" fill="#13263f"/>
<path d="M2048,1118 A14,14 0 0 1 2034,1132 H2048 Z" fill="#5a2a14"/>
</svg>
<div class="t" style="left:57.50px;top:43.00px;font-size:29px;line-height:29px;color:#ffffff;letter-spacing:-0.278px;-webkit-text-stroke:0.6px #fff;">QuantLayer</div>
<div class="t" style="left:19.70px;top:125.00px;font-size:11px;line-height:11px;color:#8d9199;letter-spacing:0.400px;">OVERVIEW</div>
<div class="t" style="left:19.70px;top:251.00px;font-size:11px;line-height:11px;color:#8d9199;letter-spacing:0.243px;">SECURITY</div>
<div class="t" style="left:19.50px;top:375.00px;font-size:11px;line-height:11px;color:#8d9199;letter-spacing:0.346px;">INFRASTRUCTURE</div>
<div class="t" style="left:19.80px;top:546.00px;font-size:11px;line-height:11px;color:#8d9199;letter-spacing:0.689px;">GOVERNANCE</div>
<div class="t" style="left:19.80px;top:625.00px;font-size:11px;line-height:11px;color:#8d9199;letter-spacing:0.160px;">SYSTEM</div>
<div class="t" style="left:52.20px;top:157.00px;font-size:15.5px;line-height:15.5px;color:#f4f5f7;letter-spacing:0.631px;">CISO Dashboard</div>
<div class="t" style="left:52.20px;top:203.00px;font-size:15.5px;line-height:15.5px;color:#f4f5f7;letter-spacing:0.667px;">SOC Dashboard</div>
<div class="t" style="left:52.20px;top:282.00px;font-size:15.5px;line-height:15.5px;color:#f4f5f7;letter-spacing:0.394px;">Zero Trust Policies</div>
<div class="t" style="left:52.20px;top:328.00px;font-size:15.5px;line-height:15.5px;color:#f4f5f7;letter-spacing:0.711px;">Threats &amp; Incidents</div>
<div class="t" style="left:52.20px;top:408.00px;font-size:15.5px;line-height:15.5px;color:#f4f5f7;letter-spacing:0.510px;">Secure Boot</div>
<div class="t" style="left:52.20px;top:453.00px;font-size:15.5px;line-height:15.5px;color:#f4f5f7;letter-spacing:0.480px;">Assets &amp; Devices</div>
<div class="t" style="left:52.20px;top:498.00px;font-size:15.5px;line-height:15.5px;color:#f4f5f7;letter-spacing:0.835px;">Network &amp; Topology</div>
<div class="t" style="left:52.20px;top:579.00px;font-size:15.5px;line-height:15.5px;color:#f4f5f7;letter-spacing:0.884px;">Compliance &amp; Reports</div>
<div class="t" style="left:52.20px;top:659.00px;font-size:15.5px;line-height:15.5px;color:#f4f5f7;letter-spacing:0.489px;">Bug Report</div>
<div class="t" style="left:52.20px;top:705.00px;font-size:15.5px;line-height:15.5px;color:#f4f5f7;letter-spacing:1.019px;">Portal Management</div>
<div class="t" style="left:52.20px;top:750.00px;font-size:15.5px;line-height:15.5px;color:#f4f5f7;letter-spacing:0.686px;">Settings</div>
<div class="t" style="left:52.20px;top:1087.00px;font-size:15.5px;line-height:15.5px;color:#f4f5f7;letter-spacing:0.700px;">Logout</div>
<div class="t" style="left:274.30px;top:35.00px;font-size:20.5px;line-height:20.5px;color:#0b0b0f;font-weight:bold;letter-spacing:-0.292px;">Welcome info!</div>
<div class="t" style="left:274.30px;top:63.00px;font-size:16.8px;line-height:16.8px;color:#2b6cb0;letter-spacing:0.266px;">Hope you have a nice afternoon</div>
<div class="t" style="left:1968.80px;top:34.00px;font-size:14px;line-height:14px;color:#1f1f1f;letter-spacing:0.467px;">info</div>
<div class="t" style="left:1968.80px;top:54.00px;font-size:12px;line-height:12px;color:#2b6cb0;letter-spacing:0.725px;">Admin</div>
<div class="t" style="left:335.20px;top:139.00px;font-size:14px;line-height:14px;color:#465262;letter-spacing:-0.078px;-webkit-text-stroke:0.2px #465262;">Risk Score</div>
<div class="t" style="left:777.90px;top:139.00px;font-size:14px;line-height:14px;color:#465262;letter-spacing:0.338px;-webkit-text-stroke:0.2px #465262;">Zero Trust Health</div>
<div class="t" style="left:1220.20px;top:139.00px;font-size:14px;line-height:14px;color:#465262;letter-spacing:0.675px;-webkit-text-stroke:0.2px #465262;">Incident Velocity</div>
<div class="t" style="left:1663.00px;top:139.00px;font-size:14px;line-height:14px;color:#465262;letter-spacing:0.410px;-webkit-text-stroke:0.2px #465262;">Trust Provenance (DAG)</div>
<div class="t" style="left:290.10px;top:184.00px;font-size:40.5px;line-height:40.5px;color:#0f1a2b;letter-spacing:-0.300px;-webkit-text-stroke:1.5px #0f1a2b;">42</div>
<div class="t" style="left:734.20px;top:184.00px;font-size:40.5px;line-height:40.5px;color:#0f1a2b;letter-spacing:-2.000px;-webkit-text-stroke:1.5px #0f1a2b;">96.8%</div>
<div class="t" style="left:1173.50px;top:184.00px;font-size:40.5px;line-height:40.5px;color:#0f1a2b;letter-spacing:-4.750px;-webkit-text-stroke:1.5px #0f1a2b;">127</div>
<div class="t" style="left:1618.40px;top:184.00px;font-size:40.5px;line-height:40.5px;color:#0f1a2b;letter-spacing:-1.650px;-webkit-text-stroke:1.5px #0f1a2b;">99.9%</div>
<div class="t" style="left:290.50px;top:237.00px;font-size:15.5px;line-height:15.5px;color:#22a355;letter-spacing:0.389px;">+8% vs 30d</div>
<div class="t" style="left:733.00px;top:237.00px;font-size:16px;line-height:16px;color:#6b7280;letter-spacing:0.429px;">verified</div>
<div class="t" style="left:1175.40px;top:237.00px;font-size:15.8px;line-height:15.8px;color:#22a355;letter-spacing:-0.444px;">12% vs 30d</div>
<div class="t" style="left:1618.20px;top:236.00px;font-size:16.3px;line-height:16.3px;color:#6b7280;letter-spacing:0.960px;">Chain-of-Custody</div>
<div class="t" style="left:289.60px;top:312.00px;font-size:19.7px;line-height:19.7px;color:#0f1a2b;font-weight:bold;letter-spacing:0.159px;">Continuous Authentication Monitor</div>
<div class="t" style="left:652.10px;top:315.00px;font-size:12.5px;line-height:12.5px;color:#17a317;">Live</div>
<div class="t" style="left:289.60px;top:351.00px;font-size:15.9px;line-height:15.9px;color:#6b7280;letter-spacing:0.821px;">Real-time enforcement latency and decision volume</div>
<div class="t" style="left:1839.00px;top:314.00px;font-size:12.5px;line-height:12.5px;color:#6b7890;letter-spacing:0.300px;">Avg Latency</div>
<div class="t" style="left:1929.40px;top:314.00px;font-size:12.5px;line-height:12.5px;color:#6b7890;letter-spacing:0.408px;">Decisions/sec</div>
<div class="t" style="left:1861.80px;top:333.00px;font-size:15.8px;line-height:15.8px;color:#2563eb;letter-spacing:-0.560px;">13.3ms</div>
<div class="t" style="left:1994.80px;top:333.00px;font-size:15.8px;line-height:15.8px;color:#14b8a6;letter-spacing:-0.500px;">55</div>
<div class="t" style="left:986.10px;top:396.00px;font-size:13px;line-height:13px;color:#68748a;letter-spacing:0.385px;">Authentication Latency (ms)</div>
<div class="t" style="left:1192.30px;top:396.00px;font-size:13px;line-height:13px;color:#68748a;letter-spacing:0.395px;">Decision Volume (/sec)</div>
<div class="t" style="left:325.50px;top:439.00px;font-size:11.5px;line-height:11.5px;color:#3b6ef0;">20</div>
<div class="t" style="left:325.50px;top:495.00px;font-size:11.5px;line-height:11.5px;color:#3b6ef0;">15</div>
<div class="t" style="left:325.50px;top:552.00px;font-size:11.5px;line-height:11.5px;color:#3b6ef0;">10</div>
<div class="t" style="left:331.50px;top:608.00px;font-size:11.5px;line-height:11.5px;color:#3b6ef0;">5</div>
<div class="t" style="left:331.50px;top:665.00px;font-size:11.5px;line-height:11.5px;color:#3b6ef0;">0</div>
<div class="t" style="left:1947.50px;top:439.00px;font-size:11.5px;line-height:11.5px;color:#17a697;">80</div>
<div class="t" style="left:1947.50px;top:495.00px;font-size:11.5px;line-height:11.5px;color:#17a697;">60</div>
<div class="t" style="left:1947.50px;top:552.00px;font-size:11.5px;line-height:11.5px;color:#17a697;">40</div>
<div class="t" style="left:1947.50px;top:608.00px;font-size:11.5px;line-height:11.5px;color:#17a697;">20</div>
<div class="t" style="left:1947.50px;top:665.00px;font-size:11.5px;line-height:11.5px;color:#17a697;">0</div>
<div class="t" style="left:340.30px;top:675.00px;font-size:11.5px;line-height:11.5px;color:#97a3b6;">0s</div>
<div class="t" style="left:475.30px;top:675.00px;font-size:11.5px;line-height:11.5px;color:#97a3b6;">5s</div>
<div class="t" style="left:606.80px;top:675.00px;font-size:11.5px;line-height:11.5px;color:#97a3b6;">10s</div>
<div class="t" style="left:741.80px;top:675.00px;font-size:11.5px;line-height:11.5px;color:#97a3b6;">15s</div>
<div class="t" style="left:876.80px;top:675.00px;font-size:11.5px;line-height:11.5px;color:#97a3b6;">20s</div>
<div class="t" style="left:1011.80px;top:675.00px;font-size:11.5px;line-height:11.5px;color:#97a3b6;">25s</div>
<div class="t" style="left:1146.80px;top:675.00px;font-size:11.5px;line-height:11.5px;color:#97a3b6;">30s</div>
<div class="t" style="left:1281.80px;top:675.00px;font-size:11.5px;line-height:11.5px;color:#97a3b6;">35s</div>
<div class="t" style="left:1416.80px;top:675.00px;font-size:11.5px;line-height:11.5px;color:#97a3b6;">40s</div>
<div class="t" style="left:1551.80px;top:675.00px;font-size:11.5px;line-height:11.5px;color:#97a3b6;">45s</div>
<div class="t" style="left:1686.80px;top:675.00px;font-size:11.5px;line-height:11.5px;color:#97a3b6;">50s</div>
<div class="t" style="left:1821.80px;top:675.00px;font-size:11.5px;line-height:11.5px;color:#97a3b6;">55s</div>
<div class="t" style="left:295.8px;top:521px;font-size:11.5px;line-height:12px;color:#3b6ef0;letter-spacing:0.55px;transform:translate(-50%,-50%) rotate(-90deg);">Latency (ms)</div>
<div class="t" style="left:1992.8px;top:518.5px;font-size:11.5px;line-height:12px;color:#17a697;letter-spacing:0.35px;transform:translate(-50%,-50%) rotate(90deg);">Decisions/sec</div>
<div class="t" style="left:448.15px;top:755.00px;font-size:15.9px;line-height:15.9px;color:#6b7890;letter-spacing:0.464px;">Peak Latency</div>
<div class="t" style="left:476.40px;top:778.00px;font-size:15.5px;line-height:15.5px;color:#1f2937;letter-spacing:-1.080px;">17.1ms</div>
<div class="t" style="left:888.50px;top:755.00px;font-size:15.9px;line-height:15.9px;color:#6b7890;letter-spacing:0.400px;">Min Latency</div>
<div class="t" style="left:911.00px;top:778.00px;font-size:15.5px;line-height:15.5px;color:#2bb59a;letter-spacing:0.750px;">8.2ms</div>
<div class="t" style="left:1311.05px;top:755.00px;font-size:15.9px;line-height:15.9px;color:#6b7890;letter-spacing:0.507px;">Total Decisions</div>
<div class="t" style="left:1349.55px;top:778.00px;font-size:15.5px;line-height:15.5px;color:#1f2937;letter-spacing:-0.225px;">3,274</div>
<div class="t" style="left:1752.35px;top:755.00px;font-size:15.9px;line-height:15.9px;color:#6b7890;letter-spacing:0.245px;">Success Rate</div>
<div class="t" style="left:1781.95px;top:778.00px;font-size:15.5px;line-height:15.5px;color:#2bb59a;letter-spacing:-0.375px;">99.8%</div>
<div class="t" style="left:289.50px;top:852.00px;font-size:15.4px;line-height:15.4px;color:#0b0b0f;font-weight:bold;letter-spacing:-0.127px;">MITRE ATT&amp;CK Techniques</div>
<div class="t" style="left:289.60px;top:880.00px;font-size:16.2px;line-height:16.2px;color:#475467;letter-spacing:-0.107px;-webkit-text-stroke:0.25px #475467;">T1566 – Phishing</div>
<div class="t" style="left:439.00px;top:882.00px;font-size:12px;line-height:12px;color:#f59e0b;">High</div>
<div class="t" style="left:1109.60px;top:908.00px;font-size:16px;line-height:16px;color:#0b0b0f;font-weight:bold;letter-spacing:-0.100px;">47</div>
<div class="t" style="left:289.60px;top:937.00px;font-size:16.2px;line-height:16.2px;color:#475467;letter-spacing:-0.104px;-webkit-text-stroke:0.25px #475467;">T1190 – Exploit Public App</div>
<div class="t" style="left:504.55px;top:939.00px;font-size:12px;line-height:12px;color:#e8424f;">Critical</div>
<div class="t" style="left:1109.60px;top:965.00px;font-size:16px;line-height:16px;color:#0b0b0f;font-weight:bold;letter-spacing:-0.100px;">33</div>
<div class="t" style="left:289.60px;top:994.00px;font-size:16.2px;line-height:16.2px;color:#475467;letter-spacing:0.243px;-webkit-text-stroke:0.25px #475467;">T1078 – Valid Accounts</div>
<div class="t" style="left:488.60px;top:996.00px;font-size:12px;line-height:12px;color:#1d6ee0;">Medium</div>
<div class="t" style="left:1109.60px;top:1022.00px;font-size:16px;line-height:16px;color:#0b0b0f;font-weight:bold;letter-spacing:-0.100px;">24</div>
<div class="t" style="left:289.60px;top:1051.00px;font-size:16.2px;line-height:16.2px;color:#475467;letter-spacing:0.250px;-webkit-text-stroke:0.25px #475467;">T1059 – Command Execution</div>
<div class="t" style="left:535.40px;top:1053.00px;font-size:12px;line-height:12px;color:#f59e0b;">High</div>
<div class="t" style="left:1109.60px;top:1079.00px;font-size:16px;line-height:16px;color:#0b0b0f;font-weight:bold;letter-spacing:-0.100px;">42</div>
<div class="t" style="left:289.60px;top:1108.00px;font-size:16.2px;line-height:16.2px;color:#475467;letter-spacing:0.043px;-webkit-text-stroke:0.25px #475467;">T1082 – System Discovery</div>
<div class="t" style="left:508.90px;top:1110.00px;font-size:12px;line-height:12px;color:#1aa886;">Low</div>
<div class="t" style="left:1175.00px;top:852.00px;font-size:15.6px;line-height:15.6px;color:#0b0b0f;font-weight:bold;letter-spacing:0.459px;">Anomaly Detection Confidence</div>
<div class="t" style="left:1926.30px;top:852.00px;font-size:13.6px;line-height:13.6px;color:#6b7280;letter-spacing:0.242px;">AI Model v2.3</div>
<div class="t" style="left:1211.80px;top:894.00px;font-size:12.5px;line-height:12.5px;color:#6b6b6b;letter-spacing:-1.750px;">110</div>
<div class="t" style="left:1214.30px;top:928.00px;font-size:12.5px;line-height:12.5px;color:#6b6b6b;">90</div>
<div class="t" style="left:1214.30px;top:985.00px;font-size:12.5px;line-height:12.5px;color:#6b6b6b;">60</div>
<div class="t" style="left:1214.30px;top:1042.00px;font-size:12.5px;line-height:12.5px;color:#6b6b6b;">30</div>
<div class="t" style="left:1221.30px;top:1099.00px;font-size:12.5px;line-height:12.5px;color:#6b6b6b;">0</div>
<div class="t" style="left:1233.00px;top:1111.00px;font-size:11.5px;line-height:11.5px;color:#6b6b6b;">1</div>
<div class="t" style="left:1259.62px;top:1111.00px;font-size:11.5px;line-height:11.5px;color:#6b6b6b;">2</div>
<div class="t" style="left:1286.24px;top:1111.00px;font-size:11.5px;line-height:11.5px;color:#6b6b6b;">3</div>
<div class="t" style="left:1312.86px;top:1111.00px;font-size:11.5px;line-height:11.5px;color:#6b6b6b;">4</div>
<div class="t" style="left:1339.48px;top:1111.00px;font-size:11.5px;line-height:11.5px;color:#6b6b6b;">5</div>
<div class="t" style="left:1366.10px;top:1111.00px;font-size:11.5px;line-height:11.5px;color:#6b6b6b;">6</div>
<div class="t" style="left:1392.72px;top:1111.00px;font-size:11.5px;line-height:11.5px;color:#6b6b6b;">7</div>
<div class="t" style="left:1419.34px;top:1111.00px;font-size:11.5px;line-height:11.5px;color:#6b6b6b;">8</div>
<div class="t" style="left:1445.96px;top:1111.00px;font-size:11.5px;line-height:11.5px;color:#6b6b6b;">9</div>
<div class="t" style="left:1469.58px;top:1111.00px;font-size:11.5px;line-height:11.5px;color:#6b6b6b;">10</div>
<div class="t" style="left:1496.20px;top:1111.00px;font-size:11.5px;line-height:11.5px;color:#6b6b6b;">11</div>
<div class="t" style="left:1522.82px;top:1111.00px;font-size:11.5px;line-height:11.5px;color:#6b6b6b;">12</div>
<div class="t" style="left:1549.44px;top:1111.00px;font-size:11.5px;line-height:11.5px;color:#6b6b6b;">13</div>
<div class="t" style="left:1576.06px;top:1111.00px;font-size:11.5px;line-height:11.5px;color:#6b6b6b;">14</div>
<div class="t" style="left:1602.68px;top:1111.00px;font-size:11.5px;line-height:11.5px;color:#6b6b6b;">15</div>
<div class="t" style="left:1629.30px;top:1111.00px;font-size:11.5px;line-height:11.5px;color:#6b6b6b;">16</div>
<div class="t" style="left:1655.92px;top:1111.00px;font-size:11.5px;line-height:11.5px;color:#6b6b6b;">17</div>
<div class="t" style="left:1682.54px;top:1111.00px;font-size:11.5px;line-height:11.5px;color:#6b6b6b;">18</div>
<div class="t" style="left:1709.16px;top:1111.00px;font-size:11.5px;line-height:11.5px;color:#6b6b6b;">19</div>
<div class="t" style="left:1735.78px;top:1111.00px;font-size:11.5px;line-height:11.5px;color:#6b6b6b;">20</div>
<div class="t" style="left:1762.40px;top:1111.00px;font-size:11.5px;line-height:11.5px;color:#6b6b6b;">21</div>
<div class="t" style="left:1789.02px;top:1111.00px;font-size:11.5px;line-height:11.5px;color:#6b6b6b;">22</div>
<div class="t" style="left:1815.64px;top:1111.00px;font-size:11.5px;line-height:11.5px;color:#6b6b6b;">23</div>
<div class="t" style="left:1842.26px;top:1111.00px;font-size:11.5px;line-height:11.5px;color:#6b6b6b;">24</div>
<div class="t" style="left:1868.88px;top:1111.00px;font-size:11.5px;line-height:11.5px;color:#6b6b6b;">25</div>
<div class="t" style="left:1895.50px;top:1111.00px;font-size:11.5px;line-height:11.5px;color:#6b6b6b;">26</div>
<div class="t" style="left:1922.12px;top:1111.00px;font-size:11.5px;line-height:11.5px;color:#6b6b6b;">27</div>
<div class="t" style="left:1948.74px;top:1111.00px;font-size:11.5px;line-height:11.5px;color:#6b6b6b;">28</div>
<div class="t" style="left:1975.36px;top:1111.00px;font-size:11.5px;line-height:11.5px;color:#6b6b6b;">29</div>
<div class="t" style="left:2001.98px;top:1111.00px;font-size:11.5px;line-height:11.5px;color:#6b6b6b;">30</div>
</body></html>
